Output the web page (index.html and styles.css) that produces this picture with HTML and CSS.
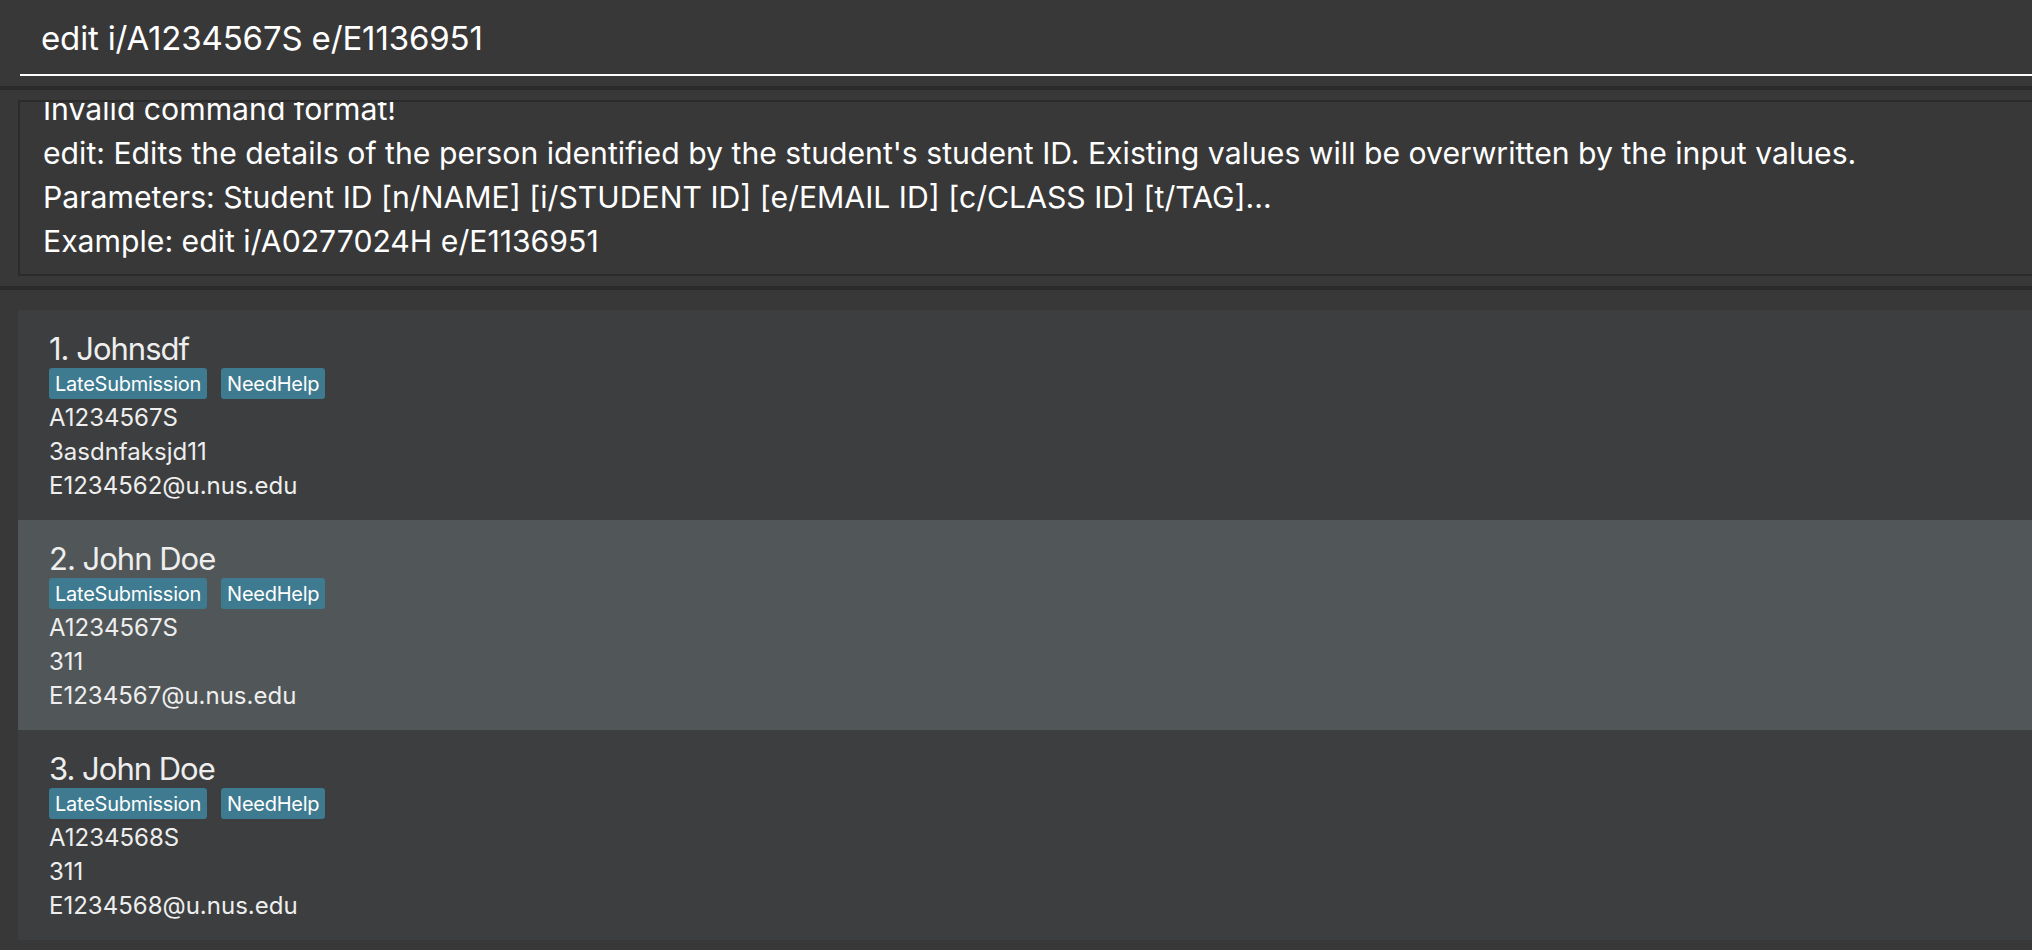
FILE: index.html
```html
<!DOCTYPE html>
<html lang="en">
<head>
<meta charset="utf-8">
<title>Student list</title>
<link rel="stylesheet" href="styles.css">
</head>
<body>
<div class="app">
  <div class="command-pane">
    <div class="command-field">edit i/A1234567S e/E1136951</div>
  </div>
  <div class="divider"></div>
  <div class="result-pane">
    <div class="result-box">
      <div class="result-text">
        <div class="result-line">Invalid command format!</div>
        <div class="result-line">edit: Edits the details of the person identified by the student's student ID. Existing values will be overwritten by the input values.</div>
        <div class="result-line">Parameters: Student ID [n/NAME] [i/STUDENT ID] [e/EMAIL ID] [c/CLASS ID] [t/TAG]...</div>
        <div class="result-line">Example: edit i/A0277024H e/E1136951</div>
      </div>
    </div>
  </div>
  <div class="divider"></div>
  <div class="list-pane">
    <div class="card">
      <div class="card-name">1. Johnsdf</div>
      <div class="tags"><span class="tag">LateSubmission</span><span class="tag">NeedHelp</span></div>
      <div class="card-line">A1234567S</div>
      <div class="card-line">3asdnfaksjd11</div>
      <div class="card-line">E1234562@u.nus.edu</div>
    </div>
    <div class="card card-alt">
      <div class="card-name">2. John Doe</div>
      <div class="tags"><span class="tag">LateSubmission</span><span class="tag">NeedHelp</span></div>
      <div class="card-line">A1234567S</div>
      <div class="card-line">311</div>
      <div class="card-line">E1234567@u.nus.edu</div>
    </div>
    <div class="card">
      <div class="card-name">3. John Doe</div>
      <div class="tags"><span class="tag">LateSubmission</span><span class="tag">NeedHelp</span></div>
      <div class="card-line">A1234568S</div>
      <div class="card-line">311</div>
      <div class="card-line">E1234568@u.nus.edu</div>
    </div>
  </div>
</div>
</body>
</html>
```
FILE: styles.css
```css
html, body {
  margin: 0;
  padding: 0;
  background: #383838;
  overflow: hidden;
}
body {
  font-family: Inter, "Noto Sans", sans-serif;
  color: #ffffff;
}
.app {
  width: 2032px;
  height: 950px;
  display: flex;
  flex-direction: column;
  overflow: hidden;
}
.command-pane {
  height: 86px;
  padding-left: 20px;
  box-sizing: border-box;
}
.command-field {
  height: 76px;
  box-sizing: border-box;
  border-bottom: 2px solid #ffffff;
  padding: 18px 0 0 21px;
  font-size: 33px;
  letter-spacing: -0.15px;
  line-height: 40px;
  color: #ffffff;
  white-space: nowrap;
}
.divider {
  height: 4px;
  background: #2a2a2a;
  flex: none;
}
.result-pane {
  height: 196px;
  padding: 10px 0 0 18px;
  box-sizing: border-box;
  overflow: hidden;
}
.result-box {
  width: 2100px;
  height: 176px;
  box-sizing: border-box;
  border: 2px solid #2b2b2b;
  overflow: hidden;
  padding-left: 23px;
}
.result-text {
  margin-top: -15px;
  font-size: 30.2px;
  line-height: 44px;
  color: #ffffff;
  white-space: nowrap;
}
.list-pane {
  flex: 1;
  padding: 20px 0 0 18px;
  display: flex;
  flex-direction: column;
}
.card {
  height: 210px;
  box-sizing: border-box;
  background: #3c3e3f;
  padding: 19px 0 0 31px;
  color: #eeeeee;
}
.card-alt {
  background: #515658;
}
.card-name {
  font-size: 31px;
  letter-spacing: -1px;
  line-height: 39px;
  white-space: nowrap;
}
.tags {
  display: flex;
  gap: 14px;
  height: 31px;
}
.tag {
  display: flex;
  align-items: center;
  padding: 0 6px;
  background: #3e7b91;
  border-radius: 3px;
  font-size: 20px;
  letter-spacing: -0.25px;
  color: #ffffff;
}
.card-line {
  font-size: 24px;
  line-height: 34px;
  white-space: nowrap;
}
.tags + .card-line {
  margin-top: 2px;
}
```
